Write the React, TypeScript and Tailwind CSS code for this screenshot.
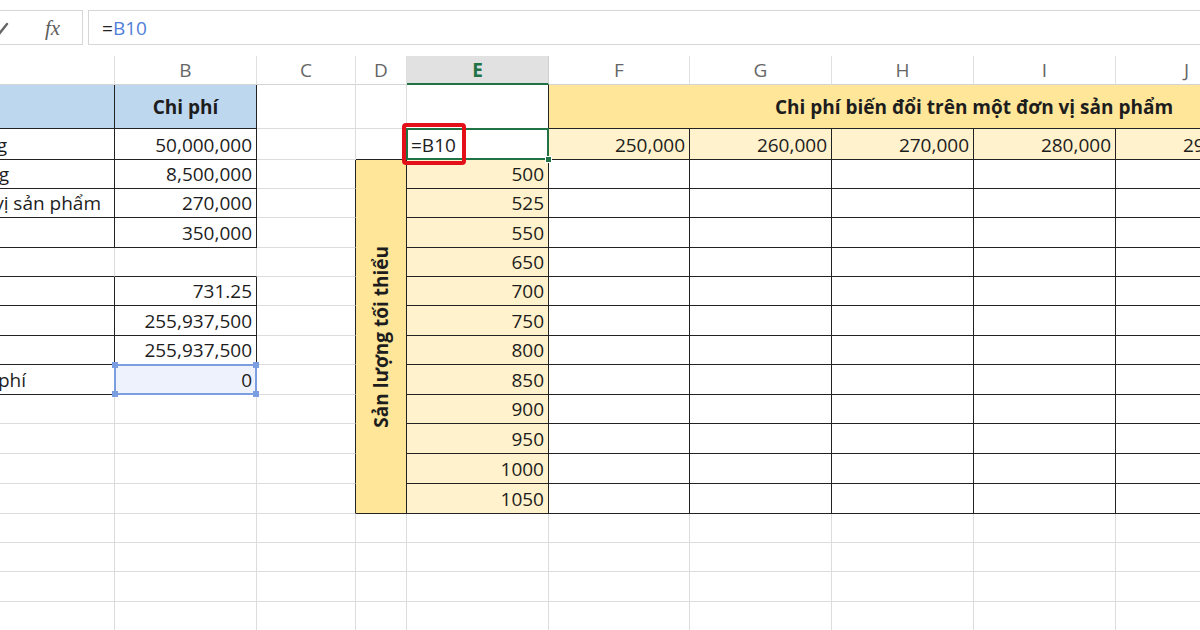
import clsx from 'clsx'

const letters = ['A', 'B', 'C', 'D', 'E', 'F', 'G', 'H', 'I', 'J', 'K']

// black-bordered blocks of the sheet (row 1-based, col A = 0)
const inTable = (r: number, c: number) =>
  (r >= 1 && r <= 5 && c <= 1) ||
  (r >= 7 && r <= 10 && c <= 1) ||
  (r >= 1 && r <= 2 && c >= 5) ||
  (r >= 3 && r <= 14 && c >= 3)

const labels: Record<number, { text: string; shift: string }> = {
  2: { text: 'Chi phí thuê mặt bằng', shift: 'mr-[107px]' },
  3: { text: 'Lương nhân viên bán hàng', shift: 'mr-[105px]' },
  4: { text: 'Chi phí biến đổi trên một đơn vị sản phẩm', shift: 'mr-[13px]' },
  10: { text: 'Chênh lệch doanh thu và chi phí', shift: 'mr-[88px]' },
}

const costs: Record<number, string> = {
  2: '50,000,000',
  3: '8,500,000',
  4: '270,000',
  5: '350,000',
  7: '731.25',
  8: '255,937,500',
  9: '255,937,500',
  10: '0',
}

const volumes = ['500', '525', '550', '650', '700', '750', '800', '850', '900', '950', '1000', '1050']
const unitCosts = ['250,000', '260,000', '270,000', '280,000', '290,000', '300,000']

function edges(r: number, c: number) {
  const right = inTable(r, c) || inTable(r, c + 1)
  const bottom = inTable(r, c) || inTable(r + 1, c)
  return clsx(
    'border-r border-b',
    right ? 'border-r-[#222]' : 'border-r-[#dcdcdc]',
    bottom ? 'border-b-[#222]' : 'border-b-[#dcdcdc]'
  )
}

function Handle({ pos }: { pos: string }) {
  return <span className={clsx('absolute h-[6px] w-[6px] bg-[#7b9ee0]', pos)} />
}

function Cell({ r, c }: { r: number; c: number }) {
  // merged title F1:K1
  if (r === 1 && c === 5) {
    return (
      <div className="col-span-6 flex items-center justify-center border-r border-b border-r-[#222] border-b-[#222] bg-[#ffe699] font-bold">
        Chi phí biến đổi trên một đơn vị sản phẩm
      </div>
    )
  }
  // merged D3:D14
  if (r === 3 && c === 3) {
    return (
      <div className="row-span-12 flex items-center justify-center border-r border-b border-r-[#222] border-b-[#222] bg-[#ffe699]">
        <span className="rotate-180 font-bold [writing-mode:vertical-rl]">Sản lượng tối thiểu</span>
      </div>
    )
  }
  // E2 – active cell with the formula
  if (r === 2 && c === 4) {
    return (
      <div className={clsx('relative flex items-end pb-px pl-[4px]', edges(r, c))}>
        =B10
        <span className="absolute -top-px -left-px h-[32px] w-[143px] border-2 border-[#217346]" />
        <span className="absolute -top-[6px] -left-[5px] h-[42px] w-[64px] rounded-[4px] border-[4px] border-[#e3101a]" />
        <span className="absolute -right-[4px] -bottom-[4px] h-[7px] w-[7px] border border-white bg-[#217346]" />
      </div>
    )
  }
  // B10 – referenced cell
  if (r === 10 && c === 1) {
    return (
      <div className={clsx('relative flex items-end justify-end bg-[#edf2fc] pr-[4px] pb-px', edges(r, c))}>
        0
        <span className="absolute -top-px -left-px h-[31px] w-[143px] border-2 border-[#7b9ee0]" />
        <Handle pos="-top-[3px] -left-[3px]" />
        <Handle pos="-top-[3px] -right-[3px]" />
        <Handle pos="-bottom-[3px] -left-[3px]" />
        <Handle pos="-bottom-[3px] -right-[3px]" />
      </div>
    )
  }

  let text: string | undefined
  let shift = ''
  let cls = 'justify-end pr-[4px]'
  let fill = ''

  if (c === 0) {
    cls = 'justify-end'
    if (r === 1) fill = 'bg-[#bdd7ee]'
    if (labels[r]) {
      text = labels[r].text
      shift = labels[r].shift
    }
  } else if (c === 1) {
    if (r === 1) {
      fill = 'bg-[#bdd7ee]'
      text = 'Chi phí'
      cls = 'justify-center font-bold'
    } else text = costs[r]
  } else if (c === 4 && r >= 3 && r <= 14) {
    fill = 'bg-[#fff2cc]'
    text = volumes[r - 3]
  } else if (r === 2 && c >= 5) {
    fill = 'bg-[#fff2cc]'
    text = unitCosts[c - 5]
  }

  return (
    <div
      className={clsx(
        'flex whitespace-nowrap',
        r === 1 ? 'items-center' : 'items-end pb-px',
        edges(r, c),
        fill,
        cls
      )}
    >
      {text && <span className={clsx('shrink-0', shift)}>{text}</span>}
    </div>
  )
}

export default function App() {
  const cells = []
  for (let r = 1; r <= 18; r++) {
    for (let c = 0; c < letters.length; c++) {
      if (c === 3 && r >= 4 && r <= 14) continue
      if (r === 1 && c >= 6) continue
      cells.push(<Cell key={`${r}-${c}`} r={r} c={c} />)
    }
  }

  return (
    <div className="h-[630px] w-[1200px] overflow-hidden bg-white font-['Open_Sans',sans-serif] text-[19px] leading-[26px] text-[#1d1d1d]">
      {/* formula bar */}
      <div className="flex h-[56px] items-start pt-[10px]">
        <div className="-ml-[20px] flex h-[35px] w-[103px] shrink-0 items-center border border-[#d6d6d6] pl-[12px]">
          <svg width="16" height="16" viewBox="0 0 16 16" className="mt-[2px]">
            <path d="M2 9 L6 13 L14 3" fill="none" stroke="#666" strokeWidth="2.4" strokeLinecap="round" />
          </svg>
          <span className="ml-[36px] font-['Liberation_Serif',serif] text-[21px] italic text-[#5e5e5e]">fx</span>
        </div>
        <div className="-mr-[20px] ml-[5px] flex h-[35px] flex-1 items-center border border-[#d6d6d6] pl-[13px]">
          <span className="text-[#222]">=</span>
          <span className="text-[#4f7fd8]">B10</span>
        </div>
      </div>

      {/* sheet */}
      <div className="-ml-[135px] grid grid-cols-[250px_142px_99px_51px_142px_141px_142px_142px_142px_142px_142px] grid-rows-[29px_44px_31px_29px_29px_30px_29px_29px_30px_29px_30px_29px_30px_30px_30px_29px_29px_30px_29px]">
        {letters.map((l, i) =>
          i === 4 ? (
            <div
              key={l}
              className="flex items-center justify-center border-r border-b-2 border-r-[#d0d0d0] border-b-[#217346] bg-[#e1e1e1] font-bold text-[#217346]"
            >
              {l}
            </div>
          ) : (
            <div
              key={l}
              className="flex items-center justify-center border-r border-b border-r-[#e0e0e0] border-b-[#d4d4d4] text-[#666]"
            >
              {l}
            </div>
          )
        )}
        {cells}
      </div>
    </div>
  )
}
